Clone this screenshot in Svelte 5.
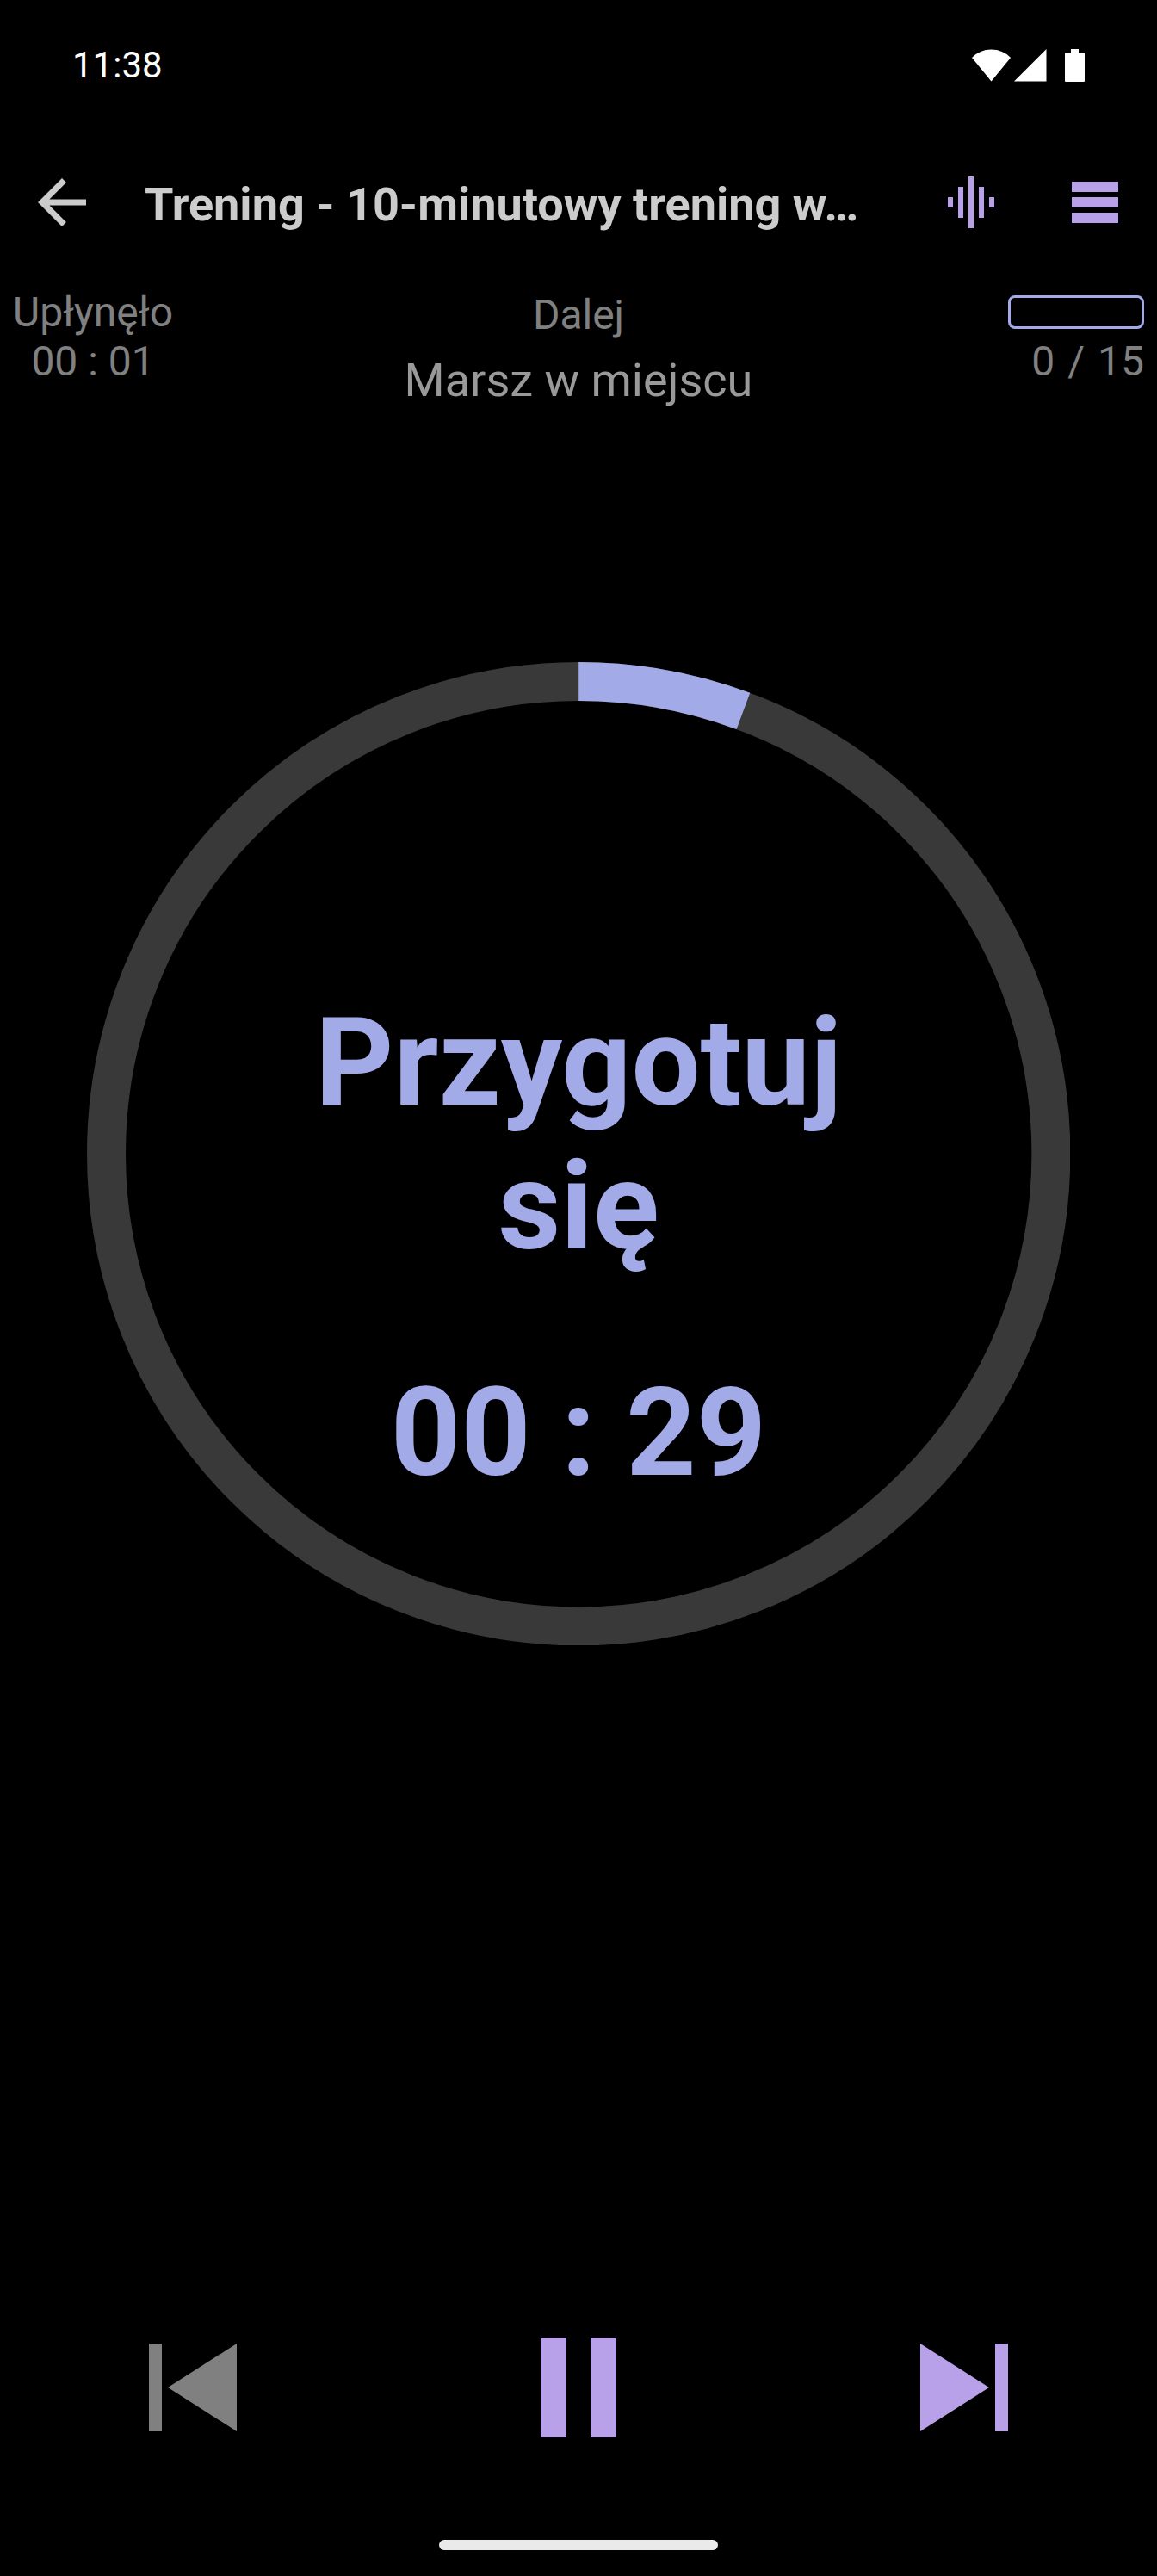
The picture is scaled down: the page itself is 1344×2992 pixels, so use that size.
<!--
  @component
  WorkoutPlayer

  Full-screen workout timer: app bar, session stats, countdown ring
  and the playback controls.
-->
<script lang="ts">
  const title = 'Trening - 10-minutowy trening w…';
  const nextExercise = 'Marsz w miejscu';
  const totalExercises = 15;
  const phaseSeconds = 30;

  let completed = 0;
  let elapsed = 1.7;
  let paused = false;

  /** Formats seconds as "mm : ss". */
  function formatTime(seconds: number) {
    const m = Math.floor(seconds / 60);
    const s = Math.floor(seconds % 60);
    return `${String(m).padStart(2, '0')} : ${String(s).padStart(2, '0')}`;
  }

  $: remaining = Math.ceil(phaseSeconds - elapsed);
  $: progress = (elapsed / phaseSeconds) * 100;
</script>

<div class="screen">
  <div class="status-bar">
    <span>11:38</span>
    <svg class="status-icons" viewBox="0 0 131 38" aria-hidden="true">
      <path d="M0 10Q9 .5 22.500 .5T45 10L22.500 37.500Z" />
      <path d="M49 37.500L86.500 0V37.500Z" />
      <path d="M115 0h9v4h6a1 1 0 0 1 1 1v32a1 1 0 0 1-1 1h-21a1 1 0 0 1-1-1V5a1 1 0 0 1 1-1h6Z" />
    </svg>
  </div>

  <header class="app-bar">
    <button class="icon-button back" aria-label="Wstecz">
      <svg width="84" height="84" viewBox="0 0 24 24">
        <path d="M20 11H7.830l5.590-5.590L12 4l-8 8 8 8 1.410-1.410L7.830 13H20v-2z" />
      </svg>
    </button>
    <h1>{title}</h1>
    <button class="icon-button" aria-label="Dźwięk">
      <svg width="54" height="60" viewBox="0 0 54 60">
        <path d="M0 24h6v12H0zM12 12h6v36h-6zM24 0h6v60h-6zM36 12h6v36h-6zM48 24h6v12h-6z" />
      </svg>
    </button>
    <button class="icon-button" aria-label="Lista ćwiczeń">
      <svg width="54" height="48" viewBox="0 0 54 48">
        <path d="M0 0h54v12H0zM0 18h54v12H0zM0 36h54v12H0z" />
      </svg>
    </button>
  </header>

  <section class="stats">
    <div class="elapsed">
      <div>Upłynęło</div>
      <div>{formatTime(elapsed)}</div>
    </div>
    <div class="next">
      <div>Dalej</div>
      <div class="next-name">{nextExercise}</div>
    </div>
    <div class="count">
      <div class="meter">
        <div class="meter-fill" style="width: {(completed / totalExercises) * 100}%"></div>
      </div>
      <div class="count-text">
        <span>{completed}</span>
        <span>/</span>
        <span>{totalExercises}</span>
      </div>
    </div>
  </section>

  <main class="timer">
    <svg class="ring" viewBox="0 0 1142 1142" aria-hidden="true">
      <circle class="track" cx="571" cy="571" r="548.5" />
      <circle
        class="progress"
        cx="571"
        cy="571"
        r="548.5"
        pathLength="100"
        stroke-dasharray="{progress} 100"
        transform="rotate(-90 571 571)"
      />
    </svg>
    <div class="timer-text">
      <div class="phase">Przygotuj się</div>
      <div>{formatTime(remaining)}</div>
    </div>
  </main>

  <nav class="controls">
    <button aria-label="Poprzednie" disabled>
      <svg width="102" height="102" viewBox="0 0 102 102">
        <path d="M0 0h15v102H0zM102 0v102L22 51z" />
      </svg>
    </button>
    <button aria-label={paused ? 'Wznów' : 'Pauza'} on:click={() => (paused = !paused)}>
      <svg width="88" height="116" viewBox="0 0 88 116">
        <path d="M0 0h30v116H0zM58 0h30v116H58z" />
      </svg>
    </button>
    <button aria-label="Następne">
      <svg width="102" height="102" viewBox="0 0 102 102">
        <path d="M0 0l80 51L0 102zM87 0h15v102H87z" />
      </svg>
    </button>
  </nav>

  <div class="home-indicator"></div>
</div>

<style>
  :global(body) {
    background: #000;
  }

  .screen {
    --accent: #b8a1e8;
    --accent-blue: #a2abe8;
    --muted: #808080;
    display: flex;
    flex-direction: column;
    box-sizing: border-box;
    min-height: 100vh;
    padding-bottom: 30px;
    background: #000;
    color: var(--muted);
    font-family: Roboto, 'Noto Sans', sans-serif;
    font-size: 48px;
    line-height: 57px;
  }

  .status-bar {
    display: flex;
    align-items: center;
    justify-content: space-between;
    height: 151px;
    padding: 0 84px;
    color: #fff;
    font-size: 42px;
  }

  .status-icons {
    width: 131px;
    height: 38px;
    fill: currentColor;
  }

  button {
    display: flex;
    align-items: center;
    justify-content: center;
    padding: 0;
    border: none;
    background: none;
    color: var(--accent);
    cursor: pointer;
  }

  button svg {
    display: block;
    fill: currentColor;
  }

  button:disabled {
    color: var(--muted);
    cursor: default;
  }

  .app-bar {
    display: flex;
    align-items: center;
    height: 168px;
  }

  .icon-button {
    flex: none;
    width: 144px;
    height: 144px;
  }

  .back {
    color: #ccc;
  }

  h1 {
    flex: 1;
    min-width: 0;
    margin: 0;
    padding: 6px 24px 0;
    overflow: hidden;
    color: #ccc;
    font-size: 54px;
    font-weight: 700;
    line-height: 64px;
    text-overflow: ellipsis;
    white-space: nowrap;
  }

  .stats {
    display: grid;
    grid-template-columns: 1fr auto 1fr;
    padding: 15px 15px 0;
  }

  .elapsed {
    justify-self: start;
    text-align: center;
  }

  .next {
    padding-top: 3px;
    text-align: center;
  }

  .next-name {
    margin-top: 16px;
    color: #999;
    font-size: 54px;
    line-height: 64px;
  }

  .count {
    justify-self: end;
  }

  .count-text {
    display: flex;
    justify-content: flex-end;
    gap: 15px;
  }

  .meter {
    box-sizing: border-box;
    width: 158px;
    height: 39px;
    margin: 9px 0;
    overflow: hidden;
    border: 3px solid var(--accent-blue);
    border-radius: 8px;
  }

  .meter-fill {
    height: 100%;
    background: var(--accent-blue);
  }

  .timer {
    display: grid;
    align-self: center;
    width: 85%;
    margin-top: 295px;
  }

  .ring,
  .timer-text {
    grid-area: 1 / 1;
  }

  .ring {
    display: block;
    width: 100%;
  }

  .track,
  .progress {
    fill: none;
    stroke: #393939;
    stroke-width: 45;
  }

  .progress {
    stroke: var(--accent-blue);
  }

  .timer-text {
    justify-self: center;
    width: 60%;
    padding-top: 382px;
    color: var(--accent-blue);
    font-size: 142px;
    font-weight: 700;
    line-height: 167px;
    text-align: center;
  }

  .phase {
    margin-bottom: 96px;
  }

  .controls {
    display: grid;
    grid-template-columns: repeat(3, 1fr);
    margin-top: auto;
  }

  .controls button {
    height: 168px;
  }

  .home-indicator {
    align-self: center;
    width: 324px;
    height: 12px;
    margin-top: 93px;
    border-radius: 6px;
    background: #eaeaea;
  }
</style>
